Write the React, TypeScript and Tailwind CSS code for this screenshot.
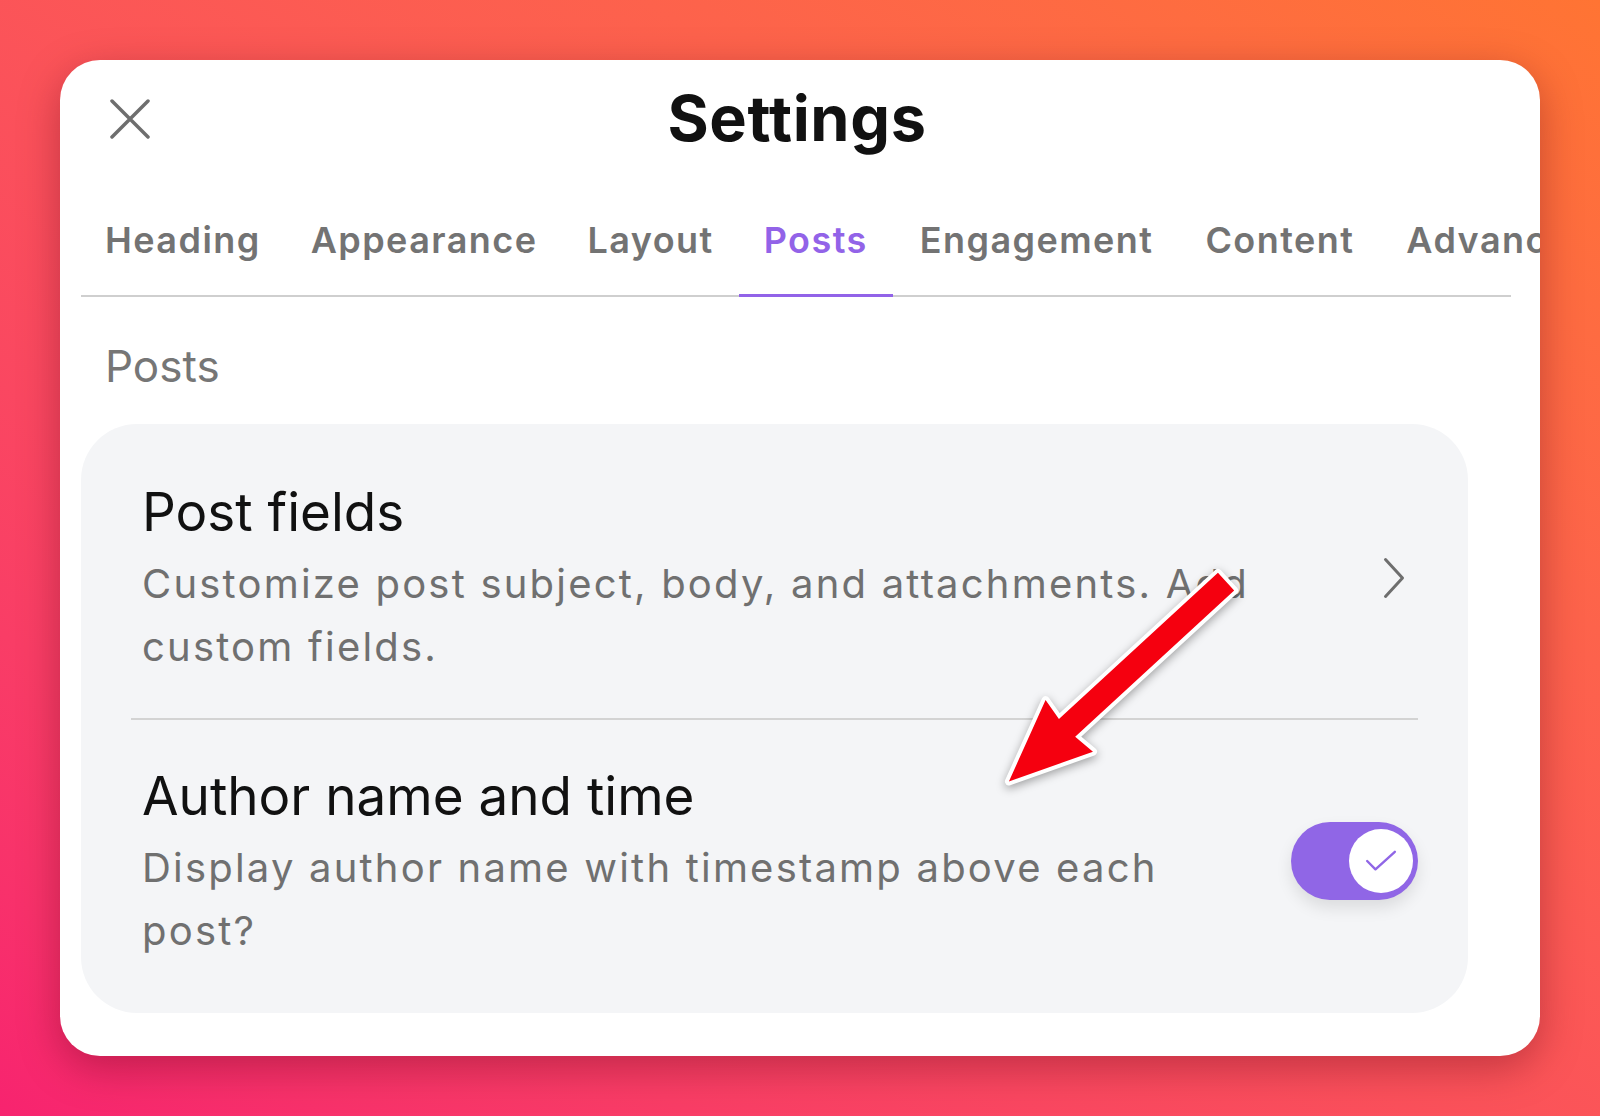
import React from 'react';

const tabs = ['Heading', 'Appearance', 'Layout', 'Posts', 'Engagement', 'Content', 'Advanced'];

const CloseIcon = () => (
  <svg width="40" height="40" viewBox="0 0 40 40" fill="none">
    <path d="M2 2L38 38M38 2L2 38" stroke="#6e6e6e" strokeWidth="3.5" strokeLinecap="round" />
  </svg>
);

const Chevron = () => (
  <svg width="22" height="42" viewBox="0 0 22 42" fill="none">
    <path d="M2.5 2.5L19.5 21L2.5 39.5" stroke="#6e6e6e" strokeWidth="3" strokeLinecap="round" strokeLinejoin="round" />
  </svg>
);

const Toggle = () => (
  <div className="flex items-center justify-end w-[127px] h-[78px] -mt-[10px] rounded-full bg-[#9066e6] pr-[5px] shadow-[0_8px_16px_rgba(0,0,0,0.10)] shrink-0">
    <div className="flex items-center justify-center w-[64px] h-[64px] rounded-full bg-white">
      <svg width="32" height="24" viewBox="0 0 34 26" fill="none">
        <path d="M2 13L11 22L32 3" stroke="#9066e6" strokeWidth="2.6" strokeLinecap="round" strokeLinejoin="round" />
      </svg>
    </div>
  </div>
);

const App = () => {
  return (
    <div className="relative min-h-screen w-full overflow-hidden bg-linear-to-tr from-[#f7236f] to-[#ff7433] font-['Inter',sans-serif]">
      <div className="pt-[60px] pl-[60px]">
        <div className="w-[1480px] h-[996px] bg-white rounded-[40px] overflow-hidden shadow-[0_12px_40px_rgba(90,0,20,0.35)]">
          {/* Header */}
          <div className="grid grid-cols-[1fr_auto_1fr] items-center pt-[27px] h-[90px]">
            <div className="pl-[50px]">
              <CloseIcon />
            </div>
            <h1 className="-ml-[6px] text-[63px] leading-[63px] font-bold tracking-[0.01em] text-[#111111]">Settings</h1>
            <div />
          </div>

          {/* Tabs */}
          <div className="relative flex ml-[20px] mt-[64px] overflow-hidden">
            {tabs.map((tab, i) => (
              <div
                key={tab}
                className={
                  tab === 'Posts'
                    ? 'shrink-0 whitespace-nowrap px-[25px] pt-[8px] pb-[36px] text-[36px] leading-[36px] tracking-[0.04em] font-semibold text-[#9263e8] border-b-[3px] border-[#9263e8]'
                    : i > 3
                      ? 'shrink-0 whitespace-nowrap pl-[27px] pr-[25px] pt-[8px] pb-[36px] text-[36px] leading-[36px] tracking-[0.04em] font-semibold text-[#737373] border-b-[3px] border-transparent'
                      : 'shrink-0 whitespace-nowrap px-[25px] pt-[8px] pb-[36px] text-[36px] leading-[36px] tracking-[0.04em] font-semibold text-[#737373] border-b-[3px] border-transparent'
                }
              >
                {tab}
              </div>
            ))}
          </div>
          <div className="ml-[21px] mr-[29px] h-[2px] -mt-[2px] bg-[#cfcfcf]" />

          {/* Section */}
          <p className="ml-[45px] mt-[47px] text-[44px] leading-[44px] text-[#767676]">Posts</p>

          <div className="ml-[21px] mt-[36px] w-[1387px] h-[589px] rounded-[56px] bg-[#f4f5f7] px-[50px]">
            <div className="flex items-center justify-between pt-[62px] pb-[40px] pl-[11px]">
              <div>
                <h2 className="text-[53px] leading-[53px] text-[#111111]">Post fields</h2>
                <p className="mt-[13px] text-[40px] leading-[63px] tracking-[0.055em] text-[#707070]">
                  <span className="block whitespace-nowrap">Customize post subject, body, and attachments. Add</span>
                  <span className="block whitespace-nowrap">custom fields.</span>
                </p>
              </div>
              <div className="mr-[13px] -mt-[8px]">
                <Chevron />
              </div>
            </div>

            <div className="h-[2px] bg-[#d3d3d3]" />

            <div className="flex items-center justify-between pt-[50px] pb-[51px] pl-[11px]">
              <div>
                <h2 className="text-[53px] leading-[53px] text-[#111111]">Author name and time</h2>
                <p className="mt-[13px] text-[40px] leading-[63px] tracking-[0.055em] text-[#707070]">
                  <span className="block whitespace-nowrap">Display author name with timestamp above each</span>
                  <span className="block whitespace-nowrap">post?</span>
                </p>
              </div>
              <Toggle />
            </div>
          </div>
        </div>
      </div>

      {/* Annotation arrow */}
      <svg
        className="pointer-events-none absolute left-0 top-0 drop-shadow-[0_3px_5px_rgba(0,0,0,0.35)]"
        width="1600"
        height="1116"
        viewBox="0 0 1600 1116"
      >
        <g transform="translate(1229 579) rotate(137.4)">
          <polygon
            points="4,-12 220,-12 217,-35 299,0 217,35 220,12 4,12"
            fill="#f5000f"
            stroke="#ffffff"
            strokeWidth="8"
            strokeLinejoin="round"
            paintOrder="stroke"
          />
        </g>
      </svg>
    </div>
  );
};

export default App;
